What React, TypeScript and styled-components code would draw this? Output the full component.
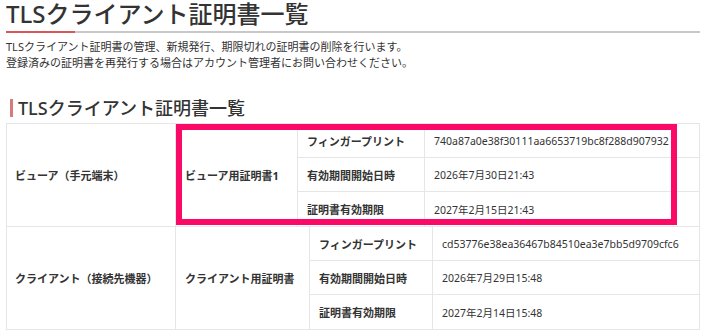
import { FC } from "react";
import styled, { createGlobalStyle } from "styled-components";

interface Cert {
  name: string;
  fingerprint: string;
  notBefore: string;
  notAfter: string;
}

interface Device {
  label: string;
  cols: [number, number];
  highlighted?: boolean;
  cert: Cert;
}

const devices: Device[] = [
  {
    label: "ビューア（手元端末）",
    cols: [122, 127],
    highlighted: true,
    cert: {
      name: "ビューア用証明書1",
      fingerprint: "740a87a0e38f30111aa6653719bc8f288d907932",
      notBefore: "2026年7月30日21:43",
      notAfter: "2027年2月15日21:43",
    },
  },
  {
    label: "クライアント（接続先機器）",
    cols: [134, 123],
    cert: {
      name: "クライアント用証明書",
      fingerprint: "cd53776e38ea36467b84510ea3e7bb5d9709cfc6",
      notBefore: "2026年7月29日15:48",
      notAfter: "2027年2月14日15:48",
    },
  },
];

const App: FC = () => {
  return (
    <Page>
      <GlobalStyle />
      <PageTitle>TLSクライアント証明書一覧</PageTitle>
      <Lead>
        TLSクライアント証明書の管理、新規発行、期限切れの証明書の削除を行います。
        <br />
        登録済みの証明書を再発行する場合はアカウント管理者にお問い合わせください。
      </Lead>
      <SectionTitle>TLSクライアント証明書一覧</SectionTitle>
      <Table>
        {devices.map((d) => (
          <DeviceRow key={d.label}>
            <DeviceCell>{d.label}</DeviceCell>
            <CertBlock nameWidth={d.cols[0]} labelWidth={d.cols[1]}>
              <NameCell>{d.cert.name}</NameCell>
              <LabelCell>フィンガープリント</LabelCell>
              <ValueCell>{d.cert.fingerprint}</ValueCell>
              <LabelCell>有効期間開始日時</LabelCell>
              <ValueCell>{d.cert.notBefore}</ValueCell>
              <LabelCell last>証明書有効期限</LabelCell>
              <ValueCell last>{d.cert.notAfter}</ValueCell>
              {d.highlighted && <Highlight />}
            </CertBlock>
          </DeviceRow>
        ))}
      </Table>
    </Page>
  );
};

export default App;

const GlobalStyle = createGlobalStyle`
  body {
    margin: 0;
    background: #fff;
    color: #333;
    font-family: "Noto Sans", "Noto Sans CJK JP", sans-serif;
  }
`;

const Page = styled.div`
  width: 694px;
  padding: 0 4px 0 6px;
`;

const PageTitle = styled.h1`
  position: relative;
  margin: 0;
  padding-bottom: 3px;
  font-size: 24px;
  line-height: 28px;
  font-weight: 500;
  color: #333;
  border-bottom: 2px solid #c8c8c8;

  &::after {
    content: "";
    position: absolute;
    left: 0;
    bottom: -2px;
    width: 69px;
    height: 2px;
    background: #d45a5a;
  }
`;

const Lead = styled.p`
  margin: 6px 0 0;
  font-size: 11px;
  line-height: 16px;
  color: #333;
`;

const SectionTitle = styled.h2`
  margin: 28px 0 0 4px;
  padding-left: 5px;
  border-left: 3px solid #d97a7a;
  font-size: 18px;
  line-height: 18px;
  font-weight: 500;
  color: #333;
`;

const Table = styled.div`
  margin-top: 6px;
  border: 1px solid #e6e6e6;
  font-size: 11px;
`;

const DeviceRow = styled.div`
  display: grid;
  grid-template-columns: 169px 1fr;

  & + & {
    border-top: 1px solid #e6e6e6;
  }
`;

const DeviceCell = styled.div`
  display: flex;
  align-items: center;
  padding: 0 8px;
  border-right: 1px solid #e6e6e6;
  font-weight: 700;
`;

const CertBlock = styled.div<{ nameWidth: number; labelWidth: number }>`
  position: relative;
  display: grid;
  grid-template-columns: ${(p) => p.nameWidth}px ${(p) => p.labelWidth}px 1fr;
  grid-template-rows: repeat(3, 34px);
`;

const NameCell = styled.div`
  grid-row: 1 / span 3;
  display: flex;
  align-items: center;
  padding: 0 8px 0 9px;
  border-right: 1px solid #e6e6e6;
  font-weight: 700;
`;

const LabelCell = styled.div<{ last?: boolean }>`
  display: flex;
  align-items: center;
  padding: 0 9px;
  border-right: 1px solid #e6e6e6;
  border-bottom: ${(p) => (p.last ? "none" : "1px solid #e6e6e6")};
  font-weight: 700;
`;

const ValueCell = styled.div<{ last?: boolean }>`
  display: flex;
  align-items: center;
  padding: 0 9px;
  border-bottom: ${(p) => (p.last ? "none" : "1px solid #e6e6e6")};
  font-size: 10.5px;
  white-space: nowrap;
`;

const Highlight = styled.div`
  position: absolute;
  left: 0;
  top: 0;
  width: 501px;
  height: 101px;
  box-sizing: border-box;
  border: 6px solid #fa0a66;
  pointer-events: none;
`;
